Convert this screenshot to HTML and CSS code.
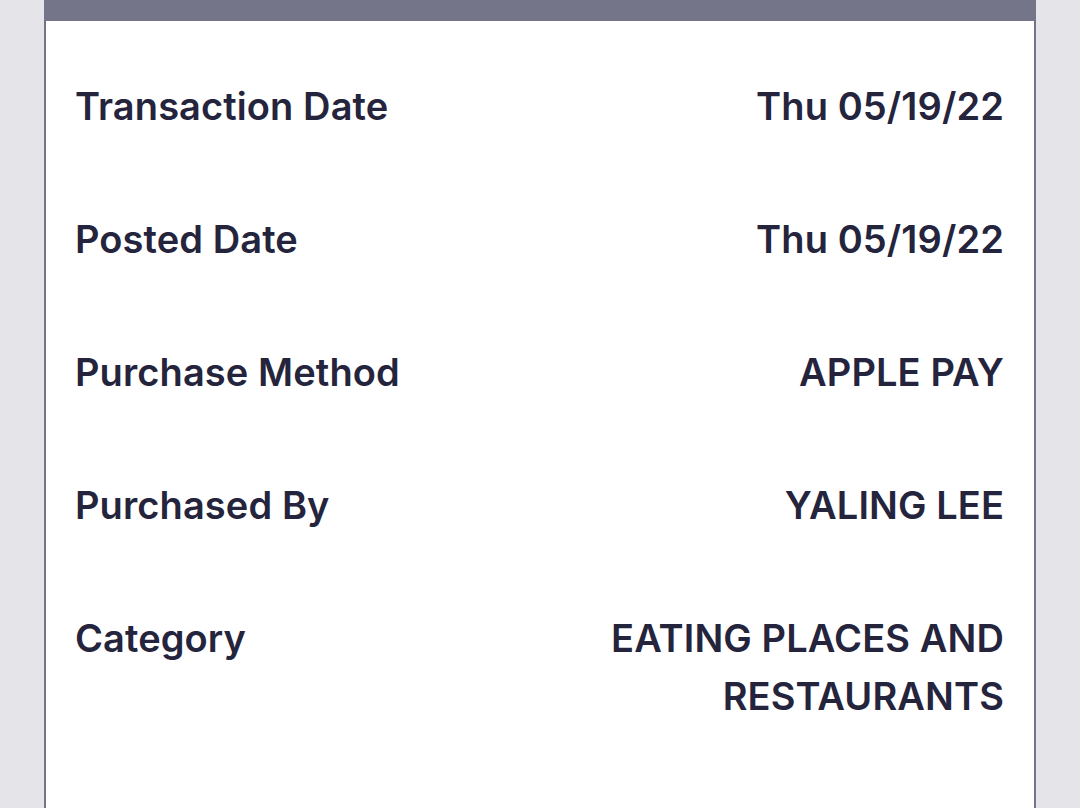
FILE: index.html
```html
<!DOCTYPE html>
<html lang="en">
<head>
<meta charset="utf-8">
<title>Transaction Details</title>
<link rel="stylesheet" href="styles.css">
</head>
<body>
  <main class="card">
    <dl class="details">
      <div class="row">
        <dt class="label">Transaction Date</dt>
        <dd class="value">Thu 05/19/22</dd>
      </div>
      <div class="row">
        <dt class="label">Posted Date</dt>
        <dd class="value">Thu 05/19/22</dd>
      </div>
      <div class="row">
        <dt class="label">Purchase Method</dt>
        <dd class="value">APPLE PAY</dd>
      </div>
      <div class="row">
        <dt class="label">Purchased By</dt>
        <dd class="value">YALING LEE</dd>
      </div>
      <div class="row">
        <dt class="label">Category</dt>
        <dd class="value value-wrap">EATING PLACES AND<br>RESTAURANTS</dd>
      </div>
    </dl>
  </main>
</body>
</html>
```
FILE: styles.css
```css
html, body {
  margin: 0;
  padding: 0;
}
body {
  background: #e4e4e9;
  height: 808px;
  overflow: hidden;
  font-family: Inter, "Noto Sans", "Liberation Sans", sans-serif;
  color: #25243d;
}
.card {
  box-sizing: border-box;
  margin-left: 44px;
  width: 992px;
  height: 808px;
  background: #ffffff;
  border: 2px solid #75758a;
  border-top-width: 21px;
  border-bottom: none;
}
.details {
  margin: 0;
  padding: 56px 30px 0 29px;
  display: flex;
  flex-direction: column;
  gap: 75px;
}
.row {
  display: flex;
  justify-content: space-between;
  align-items: flex-start;
  font-size: 38px;
  font-weight: 600;
  line-height: 58px;
  letter-spacing: 0.1px;
}
.label, .value {
  margin: 0;
}
.value {
  text-align: right;
}
```
